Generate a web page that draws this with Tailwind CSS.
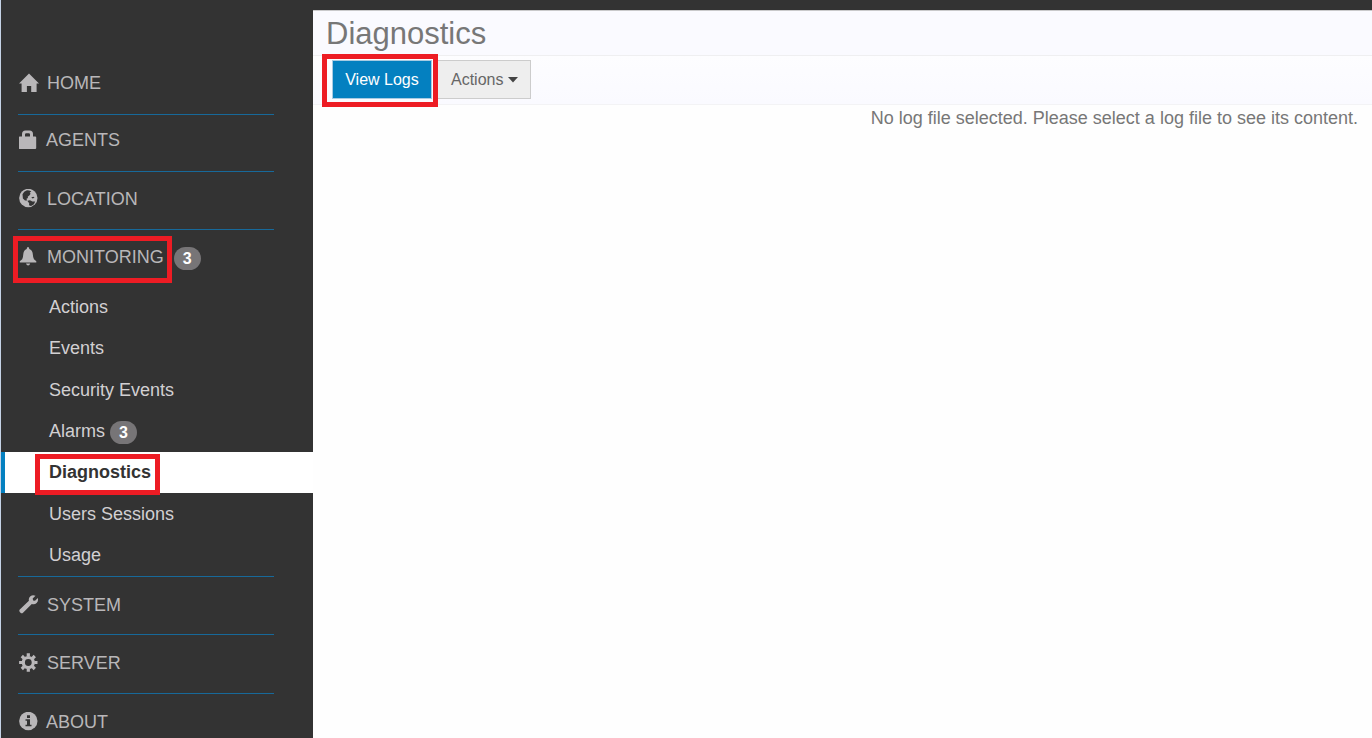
<!DOCTYPE html>
<html lang="en">
<head>
    <meta charset="UTF-8">
    <meta name="viewport" content="width=device-width, initial-scale=1.0">
    <title>Diagnostics</title>
    <script src="https://cdn.jsdelivr.net/npm/@tailwindcss/browser@4"></script>
</head>
<body class="flex min-h-screen flex-col bg-[#fefefe] font-['Liberation_Sans',Arial,sans-serif] text-lg">

    <!-- Top bar -->
    <div class="h-[10px] shrink-0 border-l border-[#c5d3e6] bg-[#333333]"></div>

    <div class="flex grow">

        <!-- Sidebar -->
        <nav class="w-[313px] shrink-0 border-l border-[#c5d3e6] bg-[#333333] pt-[47px] text-[#b9b7b9]">

            <a href="#home" class="ml-[17px] mr-[39px] flex h-[58px] items-center gap-2 border-b border-[#17699a] pb-[6px] pl-px">
                <svg class="size-5" viewBox="0 0 20 20" fill="currentColor" aria-hidden="true">
                    <path d="M10 .5 20 10.6H17.6V19H12.2V13H7.9V19H2.6V10.6H0z"/>
                </svg>
                HOME
            </a>

            <a href="#agents" class="ml-[17px] mr-[39px] flex h-[57px] items-center gap-[7px] border-b border-[#17699a] pb-[6px] pl-px">
                <svg class="size-5" viewBox="0 0 20 20" fill="currentColor" aria-hidden="true">
                    <path fill-rule="evenodd" d="M3 6.5V4Q3 .4 6.500 .4H10.500Q14 .4 14 4V6.500H16.200Q17.200 6.500 17.200 7.500V18Q17.200 19 16.200 19H.8Q-.2 19-.2 18V7.500Q-.2 6.500.8 6.500zM6 6.500H11V4.500Q11 3.200 9.700 3.200H7.300Q6 3.200 6 4.500z"/>
                </svg>
                AGENTS
            </a>

            <a href="#location" class="ml-[17px] mr-[39px] flex h-[58px] items-center gap-2 border-b border-[#17699a] pb-1 pl-px">
                <svg class="size-5" viewBox="0 0 20 20" aria-hidden="true">
                    <circle cx="9.300" cy="9" r="9.200" fill="currentColor"/>
                    <path fill="#333333" d="M8 1.300 5.200 2.800 3.500 5.200 3.900 9.400 6 11.400 8.100 11.600 7.500 9.800 9 9 8.700 7.700 10.300 6.500 11.600 4.700 10.700 3.700 12.300 2.300 10 1.400zM12.300 8.200 14.500 7.700 15.500 8.700 13.500 9.600zM8.300 11.700 11 11.200 13.300 12.500 16.200 12.600 14.900 15.200 12 17 10 16.200 10.200 14.300z"/>
                </svg>
                LOCATION
            </a>

            <div class="flex h-[56px] items-center pl-[18px]">
                <a href="#monitoring" class="relative flex items-center gap-2 pb-[2px]">
                    <svg class="size-5" viewBox="0 0 20 20" fill="currentColor" aria-hidden="true">
                        <path d="M9 0Q10.200 0 10.300 2Q13.400 3.100 13.800 7Q14 10.700 15 12.300L17.300 14.300V15.500H.8V14.300L3.200 12.300Q4.100 10.700 4.300 7Q4.700 3.100 7.700 2Q7.800 0 9 0zM7 16.500H11.200Q10.600 18.500 9.100 18.500Q7.600 18.500 7 16.500z"/>
                    </svg>
                    MONITORING
                    <span class="pointer-events-none absolute -top-[7px] -right-[8px] -bottom-[10px] -left-[6px] border-[5px] border-[#ed1c24]"></span>
                </a>
                <span class="ml-[10px] flex h-[23px] w-[27px] items-center justify-center rounded-full bg-[#777577] pt-px text-base font-bold text-white">3</span>
            </div>

            <!-- Monitoring pages -->
            <ul class="grid h-[290px] auto-rows-fr text-[#d2d0d2]">
                <li><a href="#actions" class="flex h-full items-center pl-12">Actions</a></li>
                <li><a href="#events" class="flex h-full items-center pl-12">Events</a></li>
                <li><a href="#security-events" class="flex h-full items-center pl-12">Security Events</a></li>
                <li>
                    <a href="#alarms" class="flex h-full items-center gap-[5px] pl-12">
                        Alarms
                        <span class="mt-[3px] flex h-[23px] w-[27px] items-center justify-center rounded-full bg-[#777577] pt-px text-base font-bold text-white">3</span>
                    </a>
                </li>
                <li>
                    <a href="#diagnostics" aria-current="page" class="flex h-full items-center border-l-4 border-[#0480c0] bg-white pl-11 font-bold text-[#333333]">
                        <span class="relative">
                            Diagnostics
                            <span class="pointer-events-none absolute -top-[4px] -right-[9px] -bottom-[9px] -left-[14px] border-[5px] border-[#ed1c24]"></span>
                        </span>
                    </a>
                </li>
                <li><a href="#users-sessions" class="flex h-full items-center pl-12">Users Sessions</a></li>
                <li><a href="#usage" class="flex h-full items-center pl-12">Usage</a></li>
            </ul>

            <a href="#system" class="ml-[17px] mr-[39px] flex h-[58px] items-center gap-2 border-t border-[#17699a] pb-[2px] pl-px">
                <svg class="size-5" viewBox="0 0 20 20" fill="currentColor" aria-hidden="true">
                    <path d="M16.500.7 13.700 3.500 14.100 5.400 16 5.800 18.800 3Q19.700 6 17.600 8Q15.500 9.800 12.800 8.900L4 17.700Q2.900 18.700 1.500 17.700L.8 17Q-.2 15.700.8 14.600L9.900 5.800Q9.300 3 11.400 1.200Q13.600-.6 16.500.7z"/>
                </svg>
                SYSTEM
            </a>

            <a href="#server" class="ml-[17px] mr-[39px] flex h-[59px] items-center gap-2 border-t border-[#17699a] pb-[3px] pl-px">
                <svg class="size-5" viewBox="0 0 20 20" fill="none" stroke="currentColor" aria-hidden="true">
                    <circle cx="9.300" cy="9.500" r="5" stroke-width="3.200"/>
                    <path stroke-width="3.200" d="M9.300.3V3.500M9.300 15.500V18.700M.1 9.500H3.300M15.300 9.500H18.500M2.800 3 5.100 5.300M13.500 13.700 15.800 16M15.800 3 13.500 5.300M5.100 13.700 2.800 16"/>
                </svg>
                SERVER
            </a>

            <a href="#about" class="ml-[17px] mr-[39px] flex h-[45px] items-center gap-[7px] border-t border-[#17699a] pt-[11px] pl-px">
                <svg class="size-5" viewBox="0 0 20 20" aria-hidden="true">
                    <circle cx="9.300" cy="9" r="9.200" fill="currentColor"/>
                    <path fill="#333333" d="M8 3.300H11V6H8zM6.500 7.300H11V12.700H12.500V14.200H6.500V12.700H8V8.800H6.500z"/>
                </svg>
                ABOUT
            </a>
        </nav>

        <!-- Content -->
        <main class="min-w-0 grow border-t border-[#c9c9cb] text-[#777777]">
            <h1 class="border-b border-[#efeff1] bg-[#fafaff] pt-[3px] pb-[1px] pl-[13px] text-[31px] leading-10">Diagnostics</h1>

            <div class="flex gap-[5px] border-b border-[#f3f3f5] bg-linear-to-b from-[#fdfdff] to-[#fafaff] pt-1 pb-[5px] pl-[19px] text-base">
                <div class="relative">
                    <button type="button" class="h-[39px] w-[100px] border border-[#a9cbe2] bg-[#0480c0] text-white">View Logs</button>
                    <span class="pointer-events-none absolute -top-[6px] -right-[6px] -bottom-[8px] -left-[10px] border-[5px] border-[#ed1c24]"></span>
                </div>
                <button type="button" class="flex h-[39px] items-center gap-[5px] border border-[#cccccc] bg-[#eeeeee] px-3 pl-[13px] text-[#666666]">
                    Actions
                    <svg class="h-[6px] w-[10px]" viewBox="0 0 10 6" fill="#444444" aria-hidden="true">
                        <path d="M0 0H10L5 5.500z"/>
                    </svg>
                </button>
            </div>

            <p class="pt-px pr-[14px] text-right leading-6">No log file selected. Please select a log file to see its content.</p>
        </main>
    </div>

</body>
</html>
